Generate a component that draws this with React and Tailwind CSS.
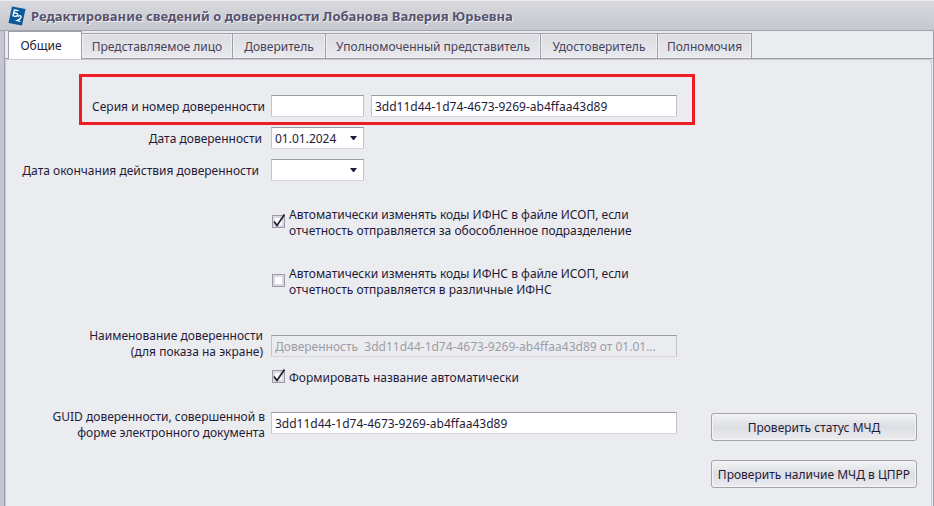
import clsx from 'clsx';
import React, { useState } from 'react';

const TABS = [
  { id: 'common', label: 'Общие', width: 'w-[74px]' },
  { id: 'subject', label: 'Представляемое лицо', width: 'w-[151px]' },
  { id: 'principal', label: 'Доверитель', width: 'w-[93px]' },
  { id: 'agent', label: 'Уполномоченный представитель', width: 'w-[215px]' },
  { id: 'certifier', label: 'Удостоверитель', width: 'w-[117px]' },
  { id: 'powers', label: 'Полномочия', width: 'w-[94px]' },
];

const GUID = '3dd11d44-1d74-4673-9269-ab4ffaa43d89';

const FIELD =
  'block h-[22px] border border-[#c3c3cb] border-t-[#9b9ba6] border-b-[#d6d6dc] bg-white pl-[3px] outline-none disabled:bg-[#ebecef] disabled:text-[#9c9ca6]';

function Logo() {
  return (
    <svg className="ml-2 h-5 w-[18px] shrink-0" viewBox="0 0 18 20" aria-hidden="true">
      <path d="M4 0.500 17.500 3 14 19.500 0.500 17Z" fill="#07589c" />
      <path d="M10.500 4.700 6.300 4 5 9.800 7.500 10.300Q9.600 10.400 9.700 8.600Q9.600 7.300 7.600 7L5.800 6.800" fill="none" stroke="#fff" strokeWidth="1.300" />
      <path d="M9.800 10.800Q10.500 9.400 12 9.700Q13.500 10.300 12.800 11.800Q12 13 8.900 14.600L12.400 15.300" fill="none" stroke="#fff" strokeWidth="1.300" />
    </svg>
  );
}

function DateSelect({ id, value }) {
  return (
    <div className="relative w-[93px]">
      <select id={id} defaultValue={value} className={clsx(FIELD, 'w-full appearance-none pt-px')}>
        <option value={value}>{value}</option>
      </select>
      <svg className="pointer-events-none absolute top-[9px] right-[7px] h-1 w-[7px]" viewBox="0 0 7 4">
        <path d="M0 0H7L4 4H3Z" fill="#1f1b38" />
      </svg>
    </div>
  );
}

function CheckBox({ label, checked, onChange, className }) {
  return (
    <label className={clsx('flex items-center gap-1', className)}>
      <span className="relative mb-[3px] block size-[13px] shrink-0">
        <input
          type="checkbox"
          checked={checked}
          onChange={(e) => onChange(e.target.checked)}
          className="block size-[13px] appearance-none border border-[#9b9ba8] bg-white shadow-[inset_0_0_0_2px_#dadae1]"
        />
        {checked && (
          <svg className="pointer-events-none absolute -top-px left-0 h-[14px] w-[14px]" viewBox="0 0 14 14">
            <path d="M2 7.500 5 11.500 12.500 0.500" fill="none" stroke="#26223c" strokeWidth="1.800" />
          </svg>
        )}
      </span>
      <span className="whitespace-pre">{label}</span>
    </label>
  );
}

function PushButton({ children }) {
  return (
    <button
      type="button"
      className="h-7 w-[206px] rounded-[3px] border border-[#a3a3ad] bg-linear-to-b from-[#f3f4f6] via-[#dcdee3] to-[#ececf0] pt-px whitespace-nowrap shadow-[inset_0_0_0_1px_#f4f4f7]"
    >
      {children}
    </button>
  );
}

export default function App() {
  const [active, setActive] = useState('common');
  const [isolated, setIsolated] = useState(true);
  const [various, setVarious] = useState(false);
  const [autoName, setAutoName] = useState(true);

  return (
    <div className="flex min-h-screen flex-col bg-[#ebecef] font-['Noto_Sans','Open_Sans',sans-serif] text-[12px] leading-4 text-[#1f1b38]">
      <header className="flex h-[31px] items-center gap-[5px] border-t border-b border-t-[#ececf0] border-b-[#a4a4ae] bg-linear-to-b from-[#d8d9de] to-[#c7c8cd]">
        <Logo />
        <h1 className="text-[13px] font-bold whitespace-nowrap text-[#57536f] [text-shadow:1px_1px_0_#eeeef4]">
          Редактирование сведений о доверенности Лобанова Валерия Юрьевна
        </h1>
      </header>

      <div className="flex grow border-l-4 border-[#c6c6cf]">
        <div className="flex grow flex-col border-x border-[#9d9dab]">
          <div role="tablist" className="flex h-7 items-end border-b border-[#9d9dab] pl-[3px]">
            {TABS.map((tab) => (
              <button
                key={tab.id}
                type="button"
                role="tab"
                aria-selected={active === tab.id}
                onClick={() => setActive(tab.id)}
                className={clsx(
                  'shrink-0 whitespace-nowrap border border-b-0 border-[#9d9dab]',
                  tab.width,
                  active === tab.id
                    ? '-mb-px h-[28px] bg-white pr-2'
                    : 'h-[25px] border-l-0 bg-linear-to-b from-[#dcdde1] to-[#e9eaee] pt-px text-[#46425c] shadow-[inset_0_0_0_1px_#f0f0f4]',
                )}
              >
                {tab.label}
              </button>
            ))}
          </div>

          <div className="mr-px grow rounded-t-[3px] border border-b-0 border-[#c9c9d2]">
            <form className="pl-px">
              <div className="relative mt-[35px] flex items-center">
                <div className="pointer-events-none absolute -top-[21px] left-[72px] h-[51px] w-[616px] border-3 border-[#ee1c24]" />
                <label htmlFor="series" className="w-[264px] shrink-0 pt-0.5 pr-[6px] text-right">
                  Серия и номер доверенности
                </label>
                <input id="series" className={clsx(FIELD, 'w-[93px]')} />
                <input aria-label="Номер доверенности" defaultValue={GUID} className={clsx(FIELD, 'ml-[7px] w-[306px]')} />
              </div>
              <div className="mt-[10px] flex items-center">
                <label htmlFor="date" className="w-[264px] shrink-0 pt-0.5 pr-[9px] text-right">
                  Дата доверенности
                </label>
                <DateSelect id="date" value="01.01.2024" />
              </div>
              <div className="mt-[10px] flex items-center">
                <label htmlFor="dateEnd" className="w-[264px] shrink-0 pt-0.5 pr-[12px] text-right whitespace-nowrap">
                  Дата окончания действия доверенности
                </label>
                <DateSelect id="dateEnd" value="" />
              </div>

              <CheckBox
                className="mt-[26px] ml-[265px]"
                label={'Автоматически изменять коды ИФНС в файле ИСОП, если\nотчетность отправляется за обособленное подразделение'}
                checked={isolated}
                onChange={setIsolated}
              />
              <CheckBox
                className="mt-[27px] ml-[265px]"
                label={'Автоматически изменять коды ИФНС в файле ИСОП, если\nотчетность отправляется в различные ИФНС'}
                checked={various}
                onChange={setVarious}
              />

              <div className="mt-[30px] flex items-center">
                <label htmlFor="title" className="w-[264px] shrink-0 pr-[8px] text-right">
                  Наименование доверенности
                  <br />
                  (для показа на экране)
                </label>
                <input
                  id="title"
                  disabled
                  value={`Доверенность  ${GUID} от 01.01...`}
                  readOnly
                  className={clsx(FIELD, 'mt-1 w-[406px]')}
                />
              </div>
              <CheckBox
                className="mt-[10px] ml-[265px]"
                label="Формировать название автоматически"
                checked={autoName}
                onChange={setAutoName}
              />

              <div className="mt-[22px] flex items-start">
                <label htmlFor="guid" className="w-[264px] shrink-0 pt-px pr-[6px] text-right">
                  GUID доверенности, совершенной в<br />
                  форме электронного документа
                </label>
                <input id="guid" defaultValue={GUID} className={clsx(FIELD, 'mt-1 w-[406px]')} />
                <div className="mt-[5px] ml-[34px] flex flex-col gap-[19px]">
                  <PushButton>Проверить статус МЧД</PushButton>
                  <PushButton>Проверить наличие МЧД в ЦПРР</PushButton>
                </div>
              </div>
            </form>
          </div>
        </div>
      </div>
    </div>
  );
}
